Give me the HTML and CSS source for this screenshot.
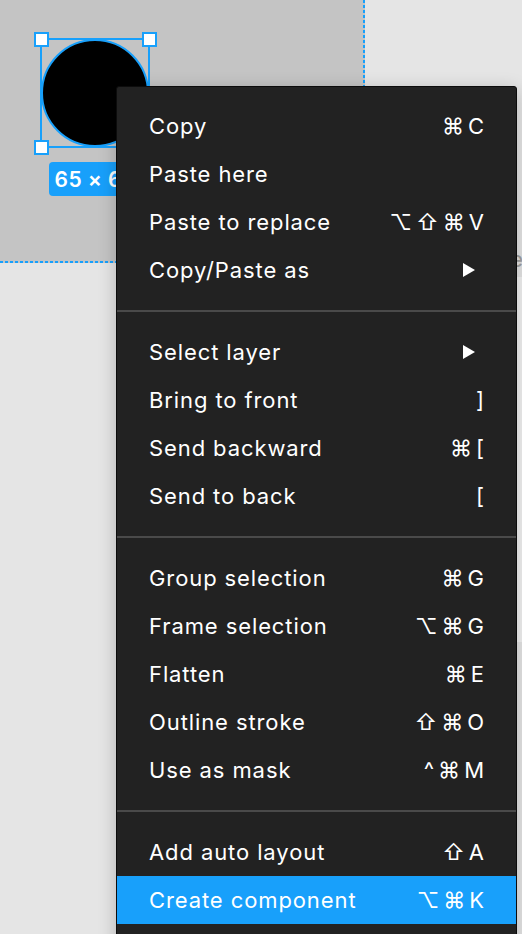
FILE: index.html
```html
<!DOCTYPE html>
<html>
<head>
<meta charset="utf-8">
<link rel="stylesheet" href="styles.css">
</head>
<body>
<div class="canvas">
  <div class="frame"></div>
  <div class="side-frame-title">Frame</div>
  <div class="side-frame"></div>
  <div class="selection">
    <div class="circle"></div>
    <span class="handle h-tl"></span>
    <span class="handle h-tr"></span>
    <span class="handle h-bl"></span>
    <span class="handle h-br"></span>
    <div class="size-label">65 × 65</div>
  </div>

  <div class="menu">
    <div class="group">
      <div class="item"><span>Copy</span><span class="sc"><i>⌘</i><i>C</i></span></div>
      <div class="item"><span>Paste here</span></div>
      <div class="item"><span>Paste to replace</span><span class="sc"><i>⌥</i><i>⇧</i><i>⌘</i><i>V</i></span></div>
      <div class="item"><span>Copy/Paste as</span><span class="arrow"></span></div>
    </div>
    <div class="sep"></div>
    <div class="group">
      <div class="item"><span>Select layer</span><span class="arrow"></span></div>
      <div class="item"><span>Bring to front</span><span class="sc"><i>]</i></span></div>
      <div class="item"><span>Send backward</span><span class="sc"><i>⌘</i><i>[</i></span></div>
      <div class="item"><span>Send to back</span><span class="sc"><i>[</i></span></div>
    </div>
    <div class="sep"></div>
    <div class="group">
      <div class="item"><span>Group selection</span><span class="sc"><i>⌘</i><i>G</i></span></div>
      <div class="item"><span>Frame selection</span><span class="sc"><i>⌥</i><i>⌘</i><i>G</i></span></div>
      <div class="item"><span>Flatten</span><span class="sc"><i>⌘</i><i>E</i></span></div>
      <div class="item"><span>Outline stroke</span><span class="sc"><i>⇧</i><i>⌘</i><i>O</i></span></div>
      <div class="item"><span>Use as mask</span><span class="sc"><i>^</i><i>⌘</i><i>M</i></span></div>
    </div>
    <div class="sep"></div>
    <div class="group">
      <div class="item"><span>Add auto layout</span><span class="sc"><i>⇧</i><i>A</i></span></div>
      <div class="item active"><span>Create component</span><span class="sc"><i>⌥</i><i>⌘</i><i>K</i></span></div>
    </div>
  </div>
</div>
</body>
</html>
```

FILE: styles.css
```css
* { box-sizing: border-box; }
html, body {
  margin: 0;
  padding: 0;
  width: 522px;
  height: 934px;
  overflow: hidden;
  background: #e5e5e5;
  font-family: Inter, "DejaVu Sans", sans-serif;
}
.canvas {
  position: relative;
  width: 522px;
  height: 934px;
  overflow: hidden;
}
.frame {
  position: absolute;
  left: 0;
  top: 0;
  width: 365px;
  height: 263px;
  background: #c4c4c4;
}
.frame::after,
.frame::before {
  content: "";
  position: absolute;
}
.frame::after {
  right: 0;
  top: 0;
  width: 2px;
  height: 100%;
  background: repeating-linear-gradient(to bottom, #18a0fb 0 3px, transparent 3px 5px);
}
.frame::before {
  left: 0;
  bottom: 0;
  height: 2px;
  width: 100%;
  background: repeating-linear-gradient(to right, #18a0fb 0 3px, transparent 3px 5px);
}
.side-frame-title {
  position: absolute;
  left: 458px;
  top: 246px;
  font-size: 22px;
  color: #a0a0a0;
}
.side-frame {
  position: absolute;
  left: 470px;
  top: 277px;
  width: 200px;
  height: 365px;
  background: #f2f2f2;
}
.selection {
  position: absolute;
  left: 40px;
  top: 38px;
  width: 110px;
  height: 110px;
  border: 2px solid #18a0fb;
}
.circle {
  position: absolute;
  left: -1px;
  top: -1px;
  width: 108px;
  height: 108px;
  border-radius: 50%;
  background: #000;
  border: 2px solid #18a0fb;
}
.handle {
  position: absolute;
  width: 15px;
  height: 15px;
  background: #fff;
  border: 2px solid #18a0fb;
}
.h-tl { left: -8.5px; top: -8.5px; }
.h-tr { right: -8.5px; top: -8.5px; }
.h-bl { left: -8.5px; bottom: -8.5px; }
.h-br { right: -8.5px; bottom: -8.5px; }
.size-label {
  position: absolute;
  left: 7px;
  top: 122px;
  width: 92px;
  height: 34px;
  border-radius: 4px;
  background: #18a0fb;
  color: #fff;
  font-size: 21px;
  font-weight: 600;
  letter-spacing: 0.4px;
  display: flex;
  align-items: center;
  justify-content: center;
}
.menu {
  position: absolute;
  left: 116px;
  top: 86px;
  width: 401px;
  background: #222222;
  border: 1px solid #0c0c0c;
  border-radius: 3px;
  box-shadow: 0 4px 18px rgba(0, 0, 0, 0.22);
  color: #ffffff;
  font-size: 22px;
  letter-spacing: 0.9px;
  padding: 15px 0 40px;
}
.group {
  display: flex;
  flex-direction: column;
}
.sep {
  height: 2px;
  background: #4a4a4a;
  margin: 16px 0;
}
.item {
  height: 48px;
  display: flex;
  align-items: center;
  justify-content: space-between;
  padding: 0 32px 0 32px;
}
.item.active {
  background: #18a0fb;
}
.sc {
  display: flex;
  gap: 4px;
  letter-spacing: 0;
}
.sc i {
  font-style: normal;
}
.arrow {
  width: 0;
  height: 0;
  border-top: 7.5px solid transparent;
  border-bottom: 7.5px solid transparent;
  border-left: 12px solid #fff;
  margin-right: 9px;
}
```
